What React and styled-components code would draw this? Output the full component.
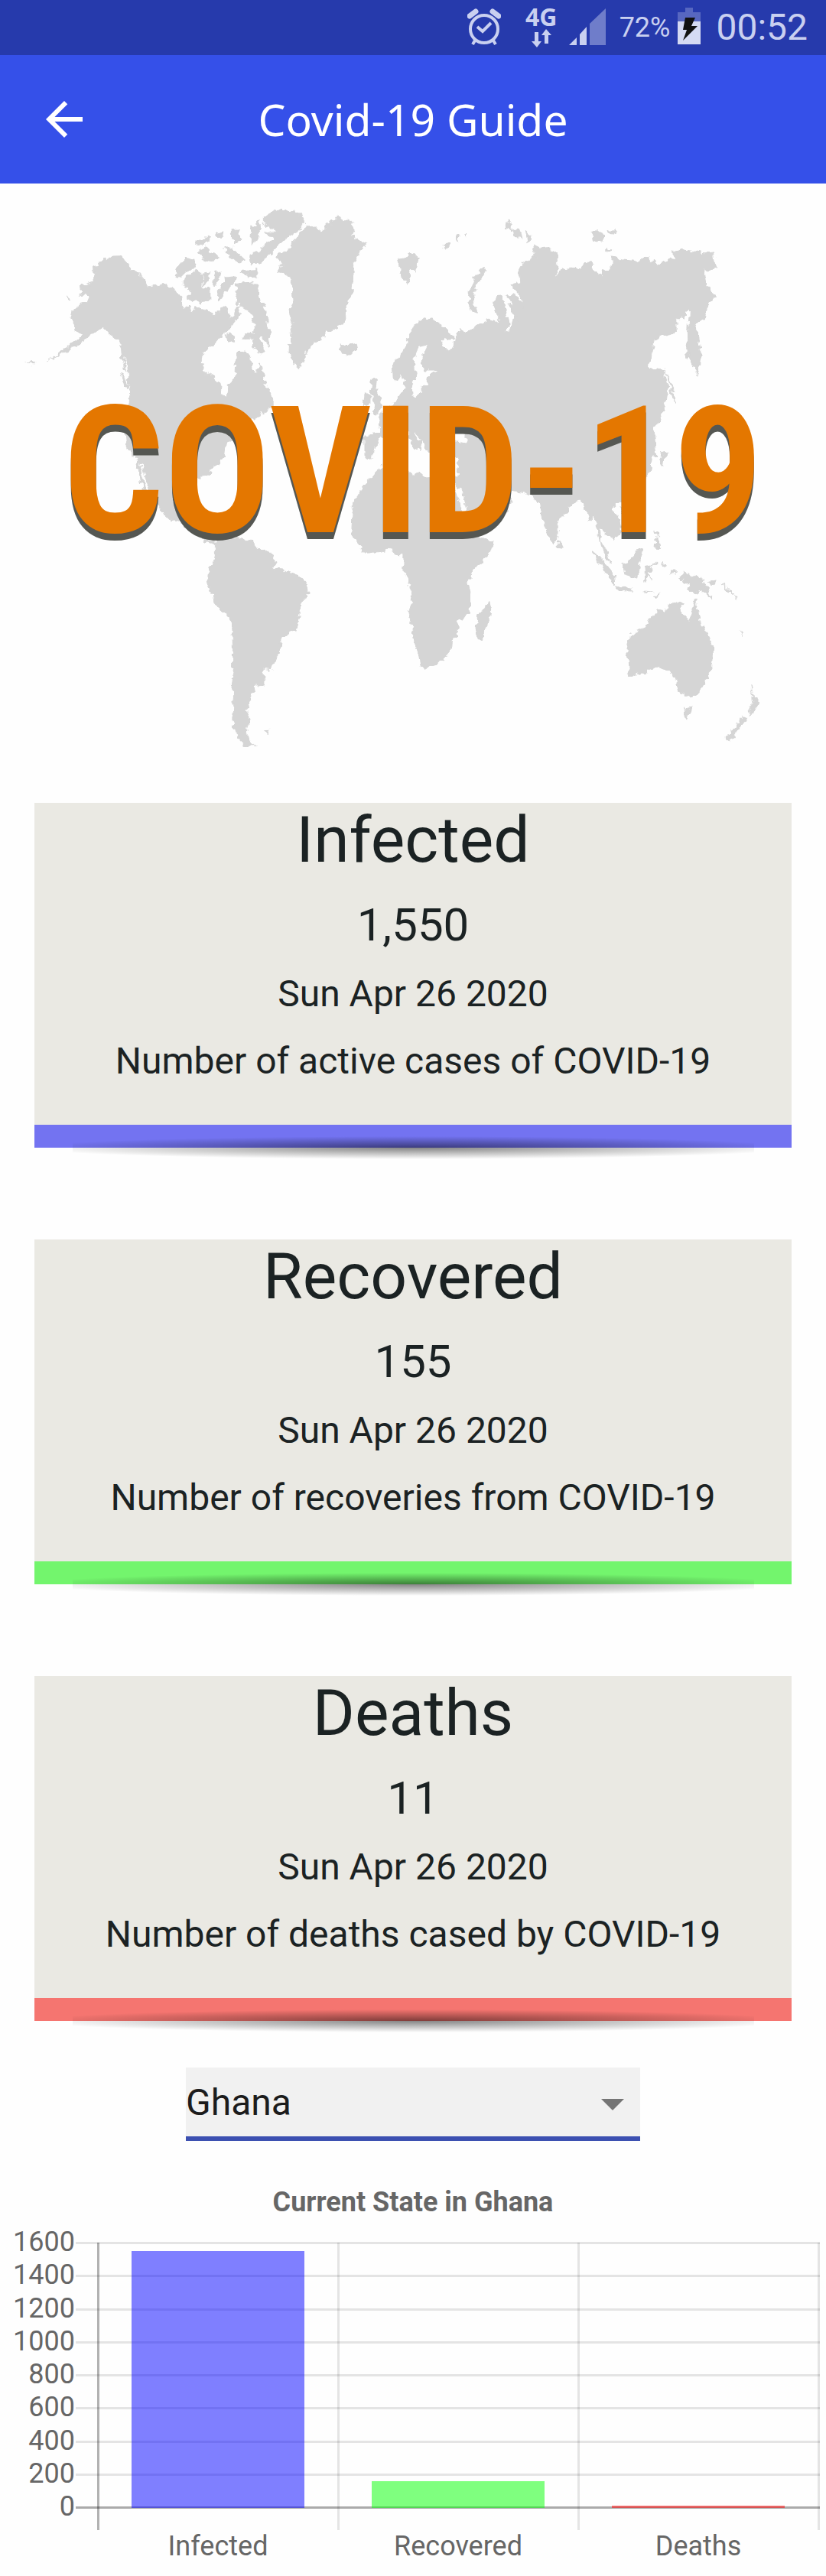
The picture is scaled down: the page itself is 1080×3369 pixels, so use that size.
import React, { useState } from "react";
import styled, { createGlobalStyle } from "styled-components";
import { MdArrowBack } from "react-icons/md";

const GlobalStyle = createGlobalStyle`
  *, *::before, *::after { box-sizing: border-box; }
  body {
    margin: 0;
    background: #fefefe;
    font-family: Roboto, "Liberation Sans", sans-serif;
    color: #1b2223;
  }
`;

const StatusBar = styled.div`
  display: flex;
  justify-content: flex-end;
  align-items: center;
  height: 72px;
  padding-right: 24px;
  background: #263aac;
  color: #c9d0f0;
`;

const StatusIcon = styled.svg`
  display: block;
  flex: none;
  width: ${(p) => p.$width}px;
  height: 72px;
  margin-right: ${(p) => p.$gap}px;
`;

const Network = styled.div`
  display: flex;
  flex-direction: column;
  align-items: center;
  gap: 4px;
  width: 40px;
  margin-right: 16px;
  font: 700 32px/24px "Noto Sans", sans-serif;
`;

const Percent = styled.span`
  margin-right: 10px;
  font-size: 36px;
  line-height: 72px;
`;

const Clock = styled.span`
  font-size: 48px;
  line-height: 72px;
`;

const AppBar = styled.header`
  display: grid;
  grid-template-columns: 72px 1fr 72px;
  align-items: center;
  height: 168px;
  padding: 0 48px;
  background: #3550e9;
  color: #fff;
`;

const BackButton = styled.button`
  display: flex;
  padding: 0;
  border: 0;
  background: none;
  color: inherit;
  font-size: 72px;
  cursor: pointer;
`;

const Title = styled.h1`
  margin: 0;
  text-align: center;
  font: 400 57px/80px "Noto Sans", "Open Sans", sans-serif;
`;

const Hero = styled.svg`
  display: block;
  width: 100%;
  height: auto;
`;

const HeroText = styled.text`
  font: 700 232px "Roboto Condensed", "Open Sans Condensed", "DejaVu Sans Condensed", Lato, sans-serif;
  fill: #e47700;
  filter: drop-shadow(0 9px 0 #555752);
`;

const Cards = styled.main`
  display: flex;
  flex-direction: column;
  gap: 120px;
  padding: 60px 45px 61px;
`;

const Card = styled.section`
  position: relative;
  padding-bottom: 47px;
  border-bottom: 30px solid ${(p) => p.$accent};
  background: #eae9e3;
  text-align: center;

  &::after {
    content: "";
    position: absolute;
    right: 5%;
    bottom: -45px;
    left: 5%;
    height: 30px;
    background: radial-gradient(56% 50% at 50% 50%, rgba(0, 0, 0, 0.48), rgba(0, 0, 0, 0));
  }
`;

const CardTitle = styled.h2`
  margin: 0 0 24px;
  font-size: 84px;
  font-weight: 400;
  line-height: 98px;
`;

const CardValue = styled.p`
  margin: 0 0 16px;
  font-size: 60px;
  line-height: 76px;
`;

const CardText = styled.p`
  margin: 0;
  font-size: 48px;
  line-height: 72px;

  & + & {
    margin-top: 16px;
  }
`;

const Picker = styled.label`
  display: flex;
  align-items: center;
  position: relative;
  width: 55%;
  margin: 0 auto 29px;
`;

const Select = styled.select`
  appearance: none;
  width: 100%;
  height: 96px;
  padding: 2px 0 0;
  border: 0;
  border-bottom: 6px solid #3c50b1;
  border-radius: 0;
  outline: 0;
  background: #f1f1f1;
  color: #1c1c1c;
  font: 400 48px/72px Roboto, sans-serif;
`;

const Caret = styled.span`
  position: absolute;
  right: 21px;
  border: 15px solid transparent;
  border-top-color: #757575;
  border-bottom-width: 0;
  pointer-events: none;
`;

const Chart = styled.svg`
  display: block;
  width: 100%;
  height: auto;
  font-size: 36px;
  fill: #666;
`;

const ChartTitle = styled.text`
  font-weight: 700;
`;

/* World map outlines, drawn on a 3136 x 2250 grid. */
const LAND = [
  // North America
  "352 325 375 318 400 297 430 285 462 284 478 312 500 335 525 352 545 378 560 408 585 405 610 398 632 392 655 418 690 445 685 480 720 485 727 515 740 482 770 490 800 505 815 530 825 500 840 500 850 480 865 500 870 535 885 515 905 480 912 500 905 530 880 545 865 575 830 610 805 630 775 665 768 700 775 740 800 750 830 780 842 790 840 830 860 835 865 795 890 770 893 720 903 690 905 655 935 658 950 680 957 720 965 740 985 725 992 700 998 740 1005 790 1030 825 1037 850 1037 880 1000 900 960 920 930 950 905 980 880 1000 860 1020 855 1065 830 1095 800 1130 760 1155 690 1155 665 1180 658 1250 680 1295 705 1300 715 1270 740 1260 730 1325 770 1330 765 1375 790 1402 812 1398 830 1420 800 1412 775 1408 755 1385 745 1360 700 1345 680 1320 650 1322 620 1290 575 1215 555 1160 540 1100 520 1075 490 1050 480 1020 475 950 485 880 500 820 487 790 485 720 465 650 445 610 420 590 400 570 385 565 360 585 330 605 300 630 260 652 180 698 250 645 290 615 310 595 285 580 290 560 270 530 275 500 300 480 330 470 342 440 305 435 310 400 340 390 358 385",
  "515 1070 528 1080 535 1130 550 1185 560 1236 545 1205 527 1140",
  "460 640 472 650 470 690 478 740 465 700",
  "458 740 480 770 486 810 472 790",
  "250 440 262 445 266 458",
  "95 705 130 704 130 707",
  // Greenland and the Arctic islands
  "1155 175 1195 170 1225 190 1230 180 1255 150 1285 135 1325 148 1352 185 1330 200 1365 220 1390 238 1360 275 1345 300 1340 370 1335 430 1310 480 1312 530 1290 560 1240 585 1205 620 1175 635 1155 675 1142 722 1110 705 1098 660 1100 590 1115 540 1100 500 1112 470 1110 380 1095 355 1055 345 1070 320 1050 290 1075 265 1100 260 1115 225 1140 190",
  "1000 130 1040 110 1090 100 1135 115 1157 155 1140 180 1100 205 1060 240 1030 270 1000 300 975 320 945 310 950 280 980 270 1010 240 1035 220 1010 190 1055 190 1020 170 1000 155",
  "985 140 990 180 975 225 950 235 955 175",
  "740 238 780 210 800 212 765 242",
  "750 265 785 245 800 270 830 290 800 308 770 298",
  "815 198 850 188 845 210 825 212",
  "880 185 905 182 908 220 890 240",
  "850 255 880 250 900 270 930 300 905 315 870 280",
  "920 335 940 340 975 338 975 370 940 365 915 352",
  "668 370 670 345 680 320 705 292 740 298 745 330 710 345 690 365",
  "695 375 745 340 770 360 765 400 795 420 795 460 750 465 710 450 725 420 695 400",
  "775 350 800 345 790 385 772 400",
  "815 350 835 345 830 380 805 400",
  "855 370 895 365 880 400 850 430 832 460 825 440",
  "895 395 940 385 975 400 985 450 1010 500 1015 560 1035 585 1015 610 1020 640 1000 600 985 595 1000 650 990 672 955 640 965 610 920 610 930 590 960 590 970 550 945 500 905 475 900 440",
  "860 590 890 600 890 625 865 620",
  "1290 630 1320 635 1350 628 1355 650 1320 675 1295 660",
  "1508 295 1540 290 1568 270 1590 290 1575 345 1560 330 1545 388 1520 340",
  // South America
  "825 1395 960 1400 980 1435 1015 1440 1037 1460 1045 1490 1035 1515 1085 1520 1130 1535 1165 1570 1170 1600 1140 1650 1138 1700 1120 1755 1090 1765 1065 1800 1060 1840 1030 1910 990 1905 1008 1940 1000 1965 970 1970 965 1995 945 2000 950 2040 935 2070 950 2100 935 2150 945 2190 970 2207 940 2210 900 2170 885 2100 890 2010 875 1960 885 1900 882 1715 830 1665 790 1575 790 1530 820 1460 820 1410",
  "1003 2148 1020 2146 1012 2156",
  // Europe and Asia
  "1568 560 1545 620 1520 680 1488 710 1490 765 1510 775 1525 745 1540 800 1515 835 1500 860 1450 900 1435 930 1445 980 1415 985 1385 990 1385 1070 1410 1080 1440 1060 1500 1060 1700 1090 1740 1090 1733 1145 1713 1160 1760 1240 1775 1310 1850 1300 1918 1290 1943 1245 1913 1215 1893 1230 1868 1215 1853 1160 1873 1175 1890 1205 1925 1205 1998 1215 2030 1235 2048 1260 2058 1310 2078 1370 2098 1412 2116 1390 2118 1330 2158 1280 2173 1250 2203 1245 2228 1280 2238 1320 2253 1305 2268 1340 2271 1380 2280 1410 2298 1470 2318 1490 2303 1440 2280 1400 2278 1350 2308 1380 2330 1402 2358 1365 2358 1325 2328 1280 2333 1265 2363 1245 2398 1235 2440 1180 2468 1120 2475 1070 2493 1065 2488 1000 2480 960 2503 935 2523 880 2533 800 2518 730 2460 720 2473 670 2483 615 2528 590 2568 590 2566 530 2588 520 2603 540 2603 500 2618 490 2613 570 2605 640 2613 680 2648 750 2663 670 2648 590 2635 550 2676 530 2683 490 2713 445 2683 400 2673 340 2723 335 2713 310 2708 270 2678 272 2588 260 2553 270 2563 300 2538 295 2498 322 2458 287 2418 305 2368 300 2323 285 2323 335 2293 340 2285 365 2258 345 2238 310 2218 310 2208 335 2168 330 2128 340 2105 380 2116 320 2113 275 2083 250 2058 255 2023 240 2033 290 1988 315 1968 350 1978 385 1943 400 1978 445 1986 485 1968 450 1948 440 1922 440 1955 480 1925 470 1950 520 1973 550 1953 520 1943 560 1933 586 1915 582 1935 560 1928 520 1913 480 1903 438 1883 440 1876 480 1888 510 1903 550 1858 530 1808 560 1763 590 1748 570 1728 615 1723 640 1703 660 1688 645 1673 605 1718 618 1725 600 1698 570 1643 535 1608 530",
  "1833 332 1843 345 1808 400 1798 460 1813 508 1778 495 1783 430 1798 370",
  "1923 145 1943 160 1943 185 1918 178",
  "1948 178 1970 178 1983 214 1955 212",
  "1994 190 2018 210 2003 236",
  "2248 190 2275 188 2298 200 2268 232 2255 222",
  "2308 190 2336 188 2330 198 2312 196",
  "2305 250 2322 262 2305 266",
  "1678 240 1705 236 1708 250 1690 256",
  "1730 205 1742 200 1738 230",
  "1765 195 1773 192 1770 212",
  "1408 775 1430 772 1425 800 1440 840 1450 880 1440 905 1415 900 1425 860 1410 820",
  "1385 825 1405 825 1405 860 1380 872",
  "2521 722 2536 760 2560 812 2545 800",
  "2545 800 2556 825 2562 862 2552 850",
  "2510 1065 2535 1050 2520 1075 2516 1110 2508 1095",
  "2120 1395 2133 1430 2121 1435",
  "2350 1275 2366 1275 2356 1290",
  // Africa
  "1480 1078 1530 1075 1530 1115 1568 1140 1590 1130 1620 1150 1713 1155 1745 1220 1775 1300 1800 1380 1873 1402 1858 1450 1798 1520 1775 1570 1786 1620 1783 1685 1736 1720 1738 1775 1718 1790 1713 1830 1668 1885 1613 1900 1598 1895 1588 1840 1573 1800 1568 1750 1550 1680 1565 1630 1555 1560 1530 1515 1530 1458 1500 1455 1485 1430 1440 1445 1390 1450 1350 1405 1335 1380 1340 1250 1420 1140",
  "1858 1640 1866 1675 1833 1785 1818 1792 1806 1760 1818 1685 1843 1675",
  // South-east Asia and Oceania
  "2363 1490 2383 1485 2428 1430 2440 1445 2430 1480 2418 1548 2373 1535",
  "2248 1443 2268 1455 2333 1535 2336 1570 2313 1555 2278 1490",
  "2336 1575 2393 1588 2400 1602 2343 1595",
  "2448 1510 2460 1495 2490 1495 2494 1486 2465 1504 2475 1520 2460 1526 2475 1556 2458 1535 2450 1570",
  "2448 1602 2480 1606 2450 1606",
  "2480 1620 2508 1606 2490 1622",
  "2516 1487 2524 1500 2518 1504",
  "2548 1515 2568 1515 2566 1530 2550 1526",
  "2578 1550 2598 1525 2668 1555 2688 1595 2703 1627 2663 1595 2638 1610 2605 1595 2618 1575",
  "2690 1568 2715 1560 2708 1575",
  "2743 1570 2765 1590 2800 1630 2770 1602",
  "2488 1400 2500 1390 2505 1430 2486 1428",
  "2488 1358 2500 1385 2490 1375",
  "2393 1770 2453 1740 2468 1705 2488 1685 2503 1670 2523 1685 2533 1655 2558 1643 2588 1652 2578 1680 2618 1718 2630 1670 2636 1635 2648 1670 2658 1720 2688 1780 2708 1820 2706 1870 2688 1930 2653 2002 2623 2018 2578 1995 2568 1950 2543 1910 2508 1895 2448 1915 2393 1937 2381 1925 2390 1900 2381 1820",
  "2601 2052 2615 2058 2628 2056 2618 2085 2605 2100",
  "2851 1970 2862 2020 2883 2035 2848 2095 2843 2070 2860 2040",
  "2823 2082 2836 2100 2773 2188 2756 2175 2793 2130",
  "2809 1755 2826 1778 2818 1770",
];

/* Seas cut out of the Europe and Asia outline. */
const SEA = [
  "1593 640 1618 635 1598 690 1603 735 1658 735 1618 760 1625 790 1603 790 1603 825 1568 832 1566 790 1583 740 1573 690",
  "1853 985 1868 1000 1883 1070 1853 1070",
  "1696 950 1753 930 1743 965 1768 1000 1768 1018 1723 1008 1696 1015",
  "1412 1082 1440 1000 1510 975 1535 960 1568 975 1600 1010 1625 1050 1696 1080 1740 1078 1733 1147 1690 1142 1620 1152 1590 1132 1568 1140 1530 1115 1530 1075 1490 1080",
  "1713 1158 1758 1225 1772 1305 1758 1290",
];

const PENINSULAS = ["1548 960 1562 965 1592 1030 1578 1045 1556 1000", "1576 1005 1600 1005 1590 1052"];

const Polygons = ({ shapes, fill }) => (
  <g fill={fill} stroke={fill} strokeWidth="3" strokeLinejoin="round">
    {shapes.map((points) => (
      <polygon key={points} points={points} />
    ))}
  </g>
);

const WorldMap = () => (
  <Hero viewBox="0 0 1080 750" role="img" aria-label="COVID-19 world map">
    <filter id="coast" colorInterpolationFilters="sRGB" x="0" y="0" width="1" height="1">
      <feTurbulence type="fractalNoise" baseFrequency="0.13" numOctaves="2" seed="4" />
      <feDisplacementMap in="SourceGraphic" scale="10" xChannelSelector="R" yChannelSelector="G" />
    </filter>
    <g filter="url(#coast)">
      <g transform="scale(0.3444 0.3333)">
        <Polygons shapes={LAND} fill="#d5d5d5" />
        <Polygons shapes={SEA} fill="#fefefe" />
        <Polygons shapes={PENINSULAS} fill="#d5d5d5" />
      </g>
    </g>
    <HeroText x="540" y="456" textAnchor="middle">
      COVID-19
    </HeroText>
  </Hero>
);

const STATS = [
  { name: "Infected", value: 1550, note: "Number of active cases of COVID-19", accent: "#7373f1", bar: "rgba(0,0,255,.5)" },
  { name: "Recovered", value: 155, note: "Number of recoveries from COVID-19", accent: "#73f56d", bar: "rgba(0,255,0,.5)" },
  { name: "Deaths", value: 11, note: "Number of deaths cased by COVID-19", accent: "#f57570", bar: "rgba(255,0,0,.5)" },
];

const TICKS = [1600, 1400, 1200, 1000, 800, 600, 400, 200, 0];
const AXIS = { left: 128, top: 104, bottom: 450, column: 314, max: 1600 };
const yOf = (value) => Math.round(AXIS.bottom - (value / AXIS.max) * (AXIS.bottom - AXIS.top));

const BarChart = ({ country }) => (
  <Chart viewBox="0 0 1080 540" role="img" aria-label={`Current State in ${country}`}>
    <ChartTitle x="540" y="63" textAnchor="middle">
      Current State in {country}
    </ChartTitle>
    {TICKS.map((tick) => (
      <g key={tick}>
        <rect x="99" y={yOf(tick) - 1} width="973" height="3" fill={tick ? "rgba(0,0,0,.1)" : "rgba(0,0,0,.33)"} />
        <text x="98" y={yOf(tick) + 11} textAnchor="end">
          {tick}
        </text>
      </g>
    ))}
    {[0, 1, 2, 3].map((i) => (
      <rect
        key={i}
        x={AXIS.left - 1 + i * AXIS.column}
        y={AXIS.top}
        width="3"
        height="376"
        fill={i ? "rgba(0,0,0,.1)" : "rgba(0,0,0,.3)"}
      />
    ))}
    {STATS.map((stat, i) => (
      <g key={stat.name}>
        <rect
          x={AXIS.left + 44 + i * AXIS.column}
          y={yOf(stat.value)}
          width="226"
          height={AXIS.bottom + 1 - yOf(stat.value)}
          fill={stat.bar}
        />
        <text x={AXIS.left + (i + 0.5) * AXIS.column} y="513" textAnchor="middle">
          {stat.name}
        </text>
      </g>
    ))}
  </Chart>
);

export default function App() {
  const [country, setCountry] = useState("Ghana");
  return (
    <>
      <GlobalStyle />
      <StatusBar>
        <StatusIcon $width={44} $gap={33} viewBox="0 0 44 72" fill="none" stroke="currentColor" aria-hidden="true">
          <circle cx="22" cy="38" r="18" strokeWidth="4" />
          <path d="M13 35l7 6 11-11" strokeWidth="4" />
          <path d="M10 53l-3 5M34 53l3 5" strokeWidth="4" />
          <path d="M3 21L11 15M41 21L33 15" strokeWidth="7" strokeLinecap="round" />
        </StatusIcon>
        <Network>
          4G
          <svg width="28" height="24" viewBox="0 0 28 24" fill="currentColor" aria-hidden="true">
            <path d="M5 4h5v12h4l-6 8-7-8h4zM18 19h5V8h4l-7-8-6 8h4z" />
          </svg>
        </Network>
        <StatusIcon $width={48} $gap={18} viewBox="0 0 48 72" fill="currentColor" aria-hidden="true">
          <path d="M0 59L10 49V59zM14 45L23 35V59H14z" />
          <path d="M27 31L48 11V59H27z" opacity=".45" />
        </StatusIcon>
        <Percent>72%</Percent>
        <StatusIcon $width={30} $gap={20} viewBox="0 0 30 72" fill="currentColor" aria-hidden="true">
          <path d="M10 10h10v6h10v12H0V16h10z" opacity=".3" />
          <path d="M0 28h30v30H0z" fill="#d5daf3" />
          <path d="M10 23h13l-5 11h8L7 53l5-14H7z" fill="#111" />
        </StatusIcon>
        <Clock>00:52</Clock>
      </StatusBar>
      <AppBar>
        <BackButton type="button" aria-label="Back">
          <MdArrowBack />
        </BackButton>
        <Title>Covid-19 Guide</Title>
      </AppBar>
      <WorldMap />
      <Cards>
        {STATS.map((stat) => (
          <Card key={stat.name} $accent={stat.accent}>
            <CardTitle>{stat.name}</CardTitle>
            <CardValue>{stat.value.toLocaleString("en-US")}</CardValue>
            <CardText>Sun Apr 26 2020</CardText>
            <CardText>{stat.note}</CardText>
          </Card>
        ))}
      </Cards>
      <Picker>
        <Select aria-label="Country" value={country} onChange={(e) => setCountry(e.target.value)}>
          <option>Ghana</option>
        </Select>
        <Caret />
      </Picker>
      <BarChart country={country} />
    </>
  );
}
